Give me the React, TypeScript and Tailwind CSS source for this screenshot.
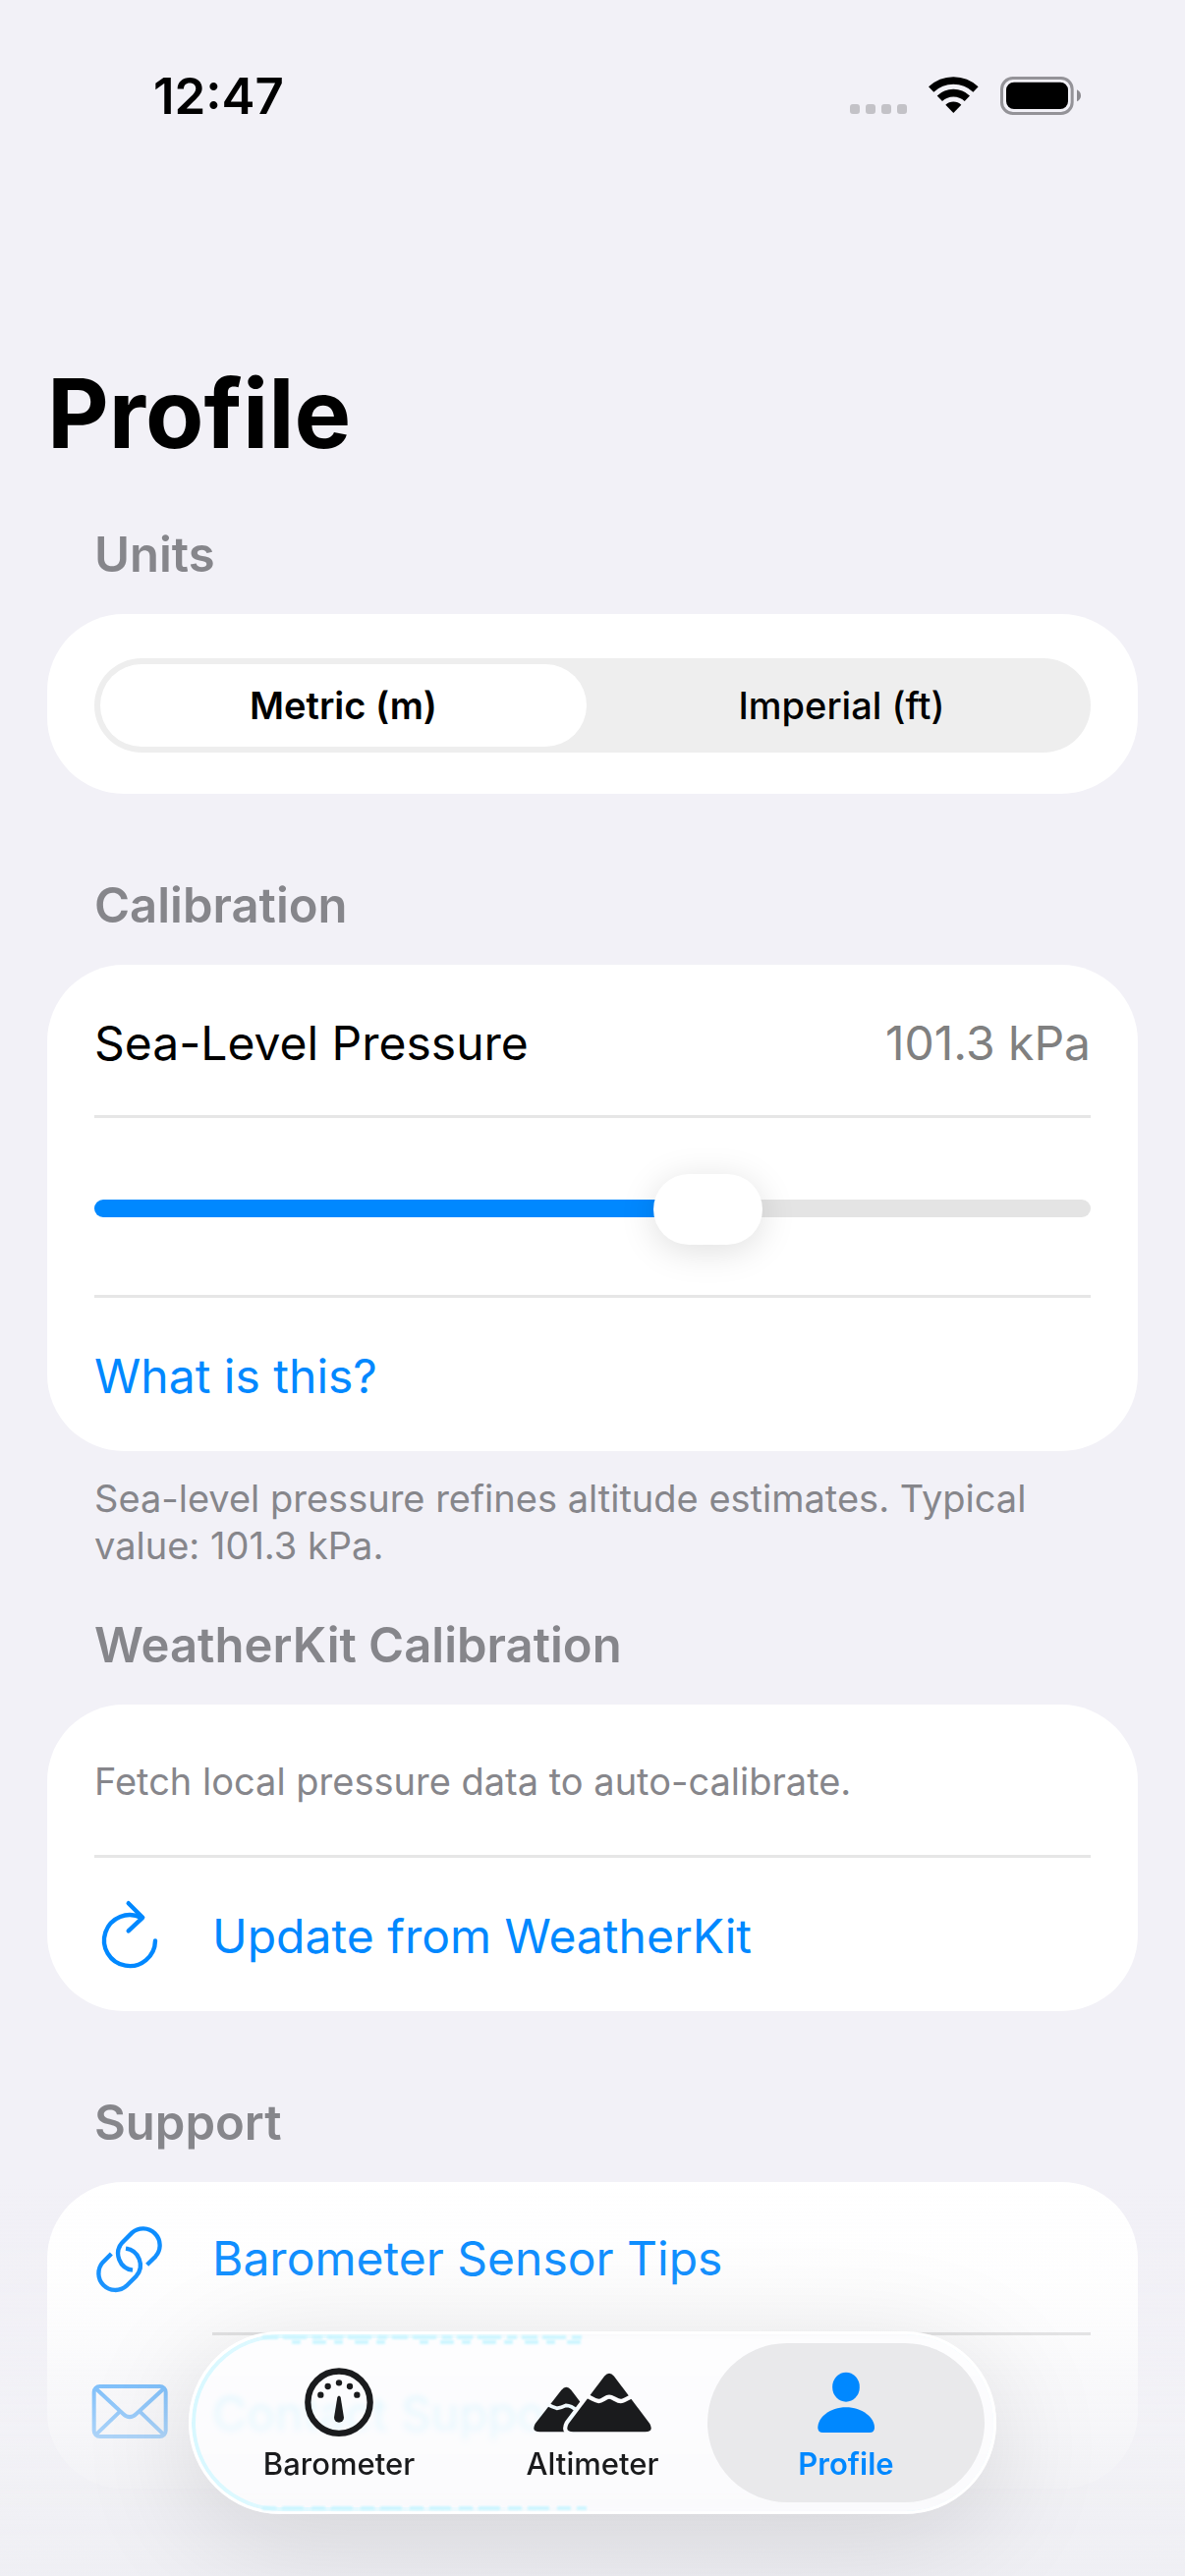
import { useState, type CSSProperties, type ReactNode } from "react";

function WifiIcon() {
  return (
    <svg viewBox="315 84 153 117" className="mb-px h-[39px] w-[51px]" aria-hidden="true">
      <g fill="none" stroke="#000" strokeWidth="23">
        <path d="M323 126A99 99 0 0 1 459 126" />
        <path d="M349 153.5A61 61 0 0 1 433 153.5" />
      </g>
      <path d="M391 198L367 173A35 35 0 0 1 415 173Z" />
    </svg>
  );
}

function BatteryIcon() {
  return (
    <svg viewBox="534 84 246 117" className="h-[39px] w-[82px]" aria-hidden="true">
      <rect x="538.5" y="88.5" width="215" height="108" rx="34" fill="none" stroke="#949398" strokeWidth="9" />
      <rect x="552" y="101" width="189" height="82" rx="24" />
      <path d="M768 124Q780 130 780 142T768 160Z" fill="#8b8a8f" />
    </svg>
  );
}

function RefreshIcon() {
  return (
    <svg viewBox="0 -3 72 84" className="h-[84px] w-[72px] shrink-0" fill="none" stroke="currentColor" strokeWidth="4.4" strokeLinecap="round" strokeLinejoin="round" aria-hidden="true">
      <path d="M62 45.5A26 26 0 1 1 48 22" />
      <path d="M34.7 7.2L49.2 21.8L34.7 35.4" />
    </svg>
  );
}

function LinkIcon() {
  const half = "M269 252L295 226A51 51 0 0 0 223 154L193 184A51 51 0 0 0 225 268";
  return (
    <svg viewBox="108 107 216 252" className="h-[84px] w-[72px] shrink-0" fill="none" stroke="currentColor" strokeWidth="13" aria-hidden="true">
      <path d={half} />
      <path d={half} transform="rotate(180 214.5 235)" />
    </svg>
  );
}

function MailIcon() {
  return (
    <svg viewBox="97 579 234 252" className="h-[84px] w-[78px] shrink-0" fill="none" stroke="currentColor" strokeWidth="12" aria-hidden="true">
      <rect x="105" y="627" width="219" height="153" rx="18" />
      <path d="M110 633L194 711Q214 730 234 711L319 633" />
      <path d="M110 775L184 704M319 775L245 704" />
    </svg>
  );
}

function GaugeIcon() {
  return (
    <svg viewBox="744 567 216 216" className="size-[72px]" fill="currentColor" aria-hidden="true">
      <circle cx="852" cy="675.5" r="95" fill="none" stroke="currentColor" strokeWidth="19" />
      <circle cx="796" cy="653" r="9.5" />
      <circle cx="818" cy="627" r="9.5" />
      <circle cx="852" cy="616" r="9.5" />
      <circle cx="885" cy="627" r="9.5" />
      <circle cx="907" cy="653" r="9.5" />
      <path d="M847 660Q852 651 857 660L867 722A15 15 0 1 1 837 722Z" />
    </svg>
  );
}

function MountainsIcon() {
  const big = "M407 236Q422 218 437 236L546 381Q559 406 532 406L312 406Q285 406 298 381Z";
  return (
    <svg viewBox="191 207 360 216" className="h-[72px] w-[120px]" fill="currentColor" aria-hidden="true">
      <mask id="back-peak" maskUnits="userSpaceOnUse" x="180" y="207" width="380" height="216">
        <rect x="180" y="207" width="380" height="216" fill="#fff" />
        <path d={big} fill="#000" stroke="#000" strokeWidth="25" />
        <path d="M230 320Q248 330 262 334Q276 332 290 325Q306 325 325 342" fill="none" stroke="#000" strokeWidth="11" />
      </mask>
      <mask id="front-peak" maskUnits="userSpaceOnUse" x="180" y="207" width="380" height="216">
        <rect x="180" y="207" width="380" height="216" fill="#fff" />
        <path d="M345 291C368 303 380 312 390 312C401 312 411 299 422 299C433 299 445 312 457 312C468 312 478 302 500 293" fill="none" stroke="#000" strokeWidth="13" />
      </mask>
      <path d="M276 278Q291 261 306 278L345 330V406H210Q183 406 196 381Z" mask="url(#back-peak)" />
      <path d={big} mask="url(#front-peak)" />
    </svg>
  );
}

function PersonIcon() {
  return (
    <svg viewBox="371 207 216 216" className="size-[72px]" fill="currentColor" aria-hidden="true">
      <ellipse cx="479" cy="269" rx="41.5" ry="45" />
      <path d="M393 393C393 362 430 331 479 331C528 331 566 362 566 393Q566 408 551 408H408Q393 408 393 393Z" />
    </svg>
  );
}

function Section({ title, children, footer }: { title: string; children: ReactNode; footer?: string }) {
  return (
    <section>
      <h2 className="mb-[30px] px-12 text-[49px] leading-[60px] font-semibold text-[#86868b]">{title}</h2>
      <div className="rounded-[78px] bg-white px-12">{children}</div>
      {footer && <p className="mt-6 px-12 text-[38px] leading-[48px] text-[#86868b]">{footer}</p>}
    </section>
  );
}

const units = [
  { id: "metric", label: "Metric (m)" },
  { id: "imperial", label: "Imperial (ft)" },
];

function UnitPicker() {
  const [unit, setUnit] = useState("metric");
  return (
    <div role="radiogroup" aria-label="Units" className="flex h-24 gap-3 rounded-full bg-[#eeeeee] p-1.5">
      {units.map(({ id, label }) => (
        <label key={id} className="flex flex-1 cursor-pointer items-center justify-center rounded-full text-[38px] leading-[48px] font-medium has-checked:bg-white has-checked:font-semibold">
          <input type="radio" name="unit" value={id} checked={unit === id} onChange={() => setUnit(id)} className="sr-only" />
          {label}
        </label>
      ))}
    </div>
  );
}

const MIN = 95;
const MAX = 105;

function Calibration() {
  const [pressure, setPressure] = useState(101.3);
  const fill = { "--fill": `${((pressure - MIN) / (MAX - MIN)) * 100}%` } as CSSProperties;
  return (
    <>
      <div className="flex h-[156px] items-center justify-between border-b-3 border-[#e6e6e6] pt-1.5 text-[48px] leading-[60px]">
        <label htmlFor="pressure">Sea-Level Pressure</label>
        <output htmlFor="pressure" className="text-[#808080]">{pressure.toFixed(1)} kPa</output>
      </div>
      <div className="flex h-[183px] items-center border-b-3 border-[#e6e6e6] pt-[3px]">
        <input
          id="pressure"
          type="range"
          min={MIN}
          max={MAX}
          step={0.1}
          value={pressure}
          onChange={(e) => setPressure(Number(e.target.value))}
          style={fill}
          className="h-[72px] w-full appearance-none bg-transparent [&::-webkit-slider-runnable-track]:h-[18px] [&::-webkit-slider-runnable-track]:rounded-full [&::-webkit-slider-runnable-track]:bg-[linear-gradient(to_right,#0088ff_var(--fill),#e4e4e4_var(--fill))] [&::-webkit-slider-thumb]:mt-[-26px] [&::-webkit-slider-thumb]:h-[72px] [&::-webkit-slider-thumb]:w-[111px] [&::-webkit-slider-thumb]:appearance-none [&::-webkit-slider-thumb]:rounded-full [&::-webkit-slider-thumb]:bg-white [&::-webkit-slider-thumb]:shadow-[0_6px_36px_rgba(0,0,0,0.13)]"
        />
      </div>
      <div className="flex h-[156px] items-center pt-[3px]">
        <button type="button" className="text-[48px] leading-[60px] text-[#0088ff]">What is this?</button>
      </div>
    </>
  );
}

function IconCell({ children }: { children: ReactNode }) {
  return <span className="flex w-[72px] shrink-0 justify-center">{children}</span>;
}

const tabs = [
  { label: "Barometer", icon: <GaugeIcon /> },
  { label: "Altimeter", icon: <MountainsIcon /> },
  { label: "Profile", icon: <PersonIcon /> },
];

function GlassRim() {
  return (
    <>
      <span aria-hidden="true" className="pointer-events-none absolute inset-0 rounded-full border-4 border-[#d8f8ff] mask-r-from-0% mask-r-to-50%" />
      <svg viewBox="0 0 330 180" className="pointer-events-none absolute inset-y-0 left-[72px] h-full w-[330px] blur-[1px]" fill="none" stroke="#cdf6ff" strokeWidth="4" aria-hidden="true">
        <path d="M0 3H330" strokeDasharray="16 5 24 6 10 5" />
        <path d="M30 8H128M160 8H324" strokeDasharray="9 12 14 8" />
        <path d="M0 177H330" strokeDasharray="14 6 22 8" />
      </svg>
    </>
  );
}

function TabBar() {
  const [active, setActive] = useState("Profile");
  return (
    <nav aria-label="Main" className="pointer-events-auto relative flex rounded-full border-3 border-white bg-[#fdfdff]/75 p-[9px] shadow-[0_24px_120px_rgba(0,0,0,0.13)] backdrop-blur-[3px]">
      <GlassRim />
      {tabs.map(({ label, icon }, i) => (
        <button
          key={label}
          type="button"
          onClick={() => setActive(label)}
          aria-current={active === label ? "page" : undefined}
          className={`relative flex w-[282px] flex-col items-center gap-[9px] rounded-full pt-6 pb-[21px] text-[31px] leading-9 ${i > 0 ? "-ml-6" : ""} ${active === label ? "bg-[#e9e9eb] font-semibold text-[#0088ff]" : "font-medium text-[#1a1b1d]"}`}
        >
          {icon}
          {label}
        </button>
      ))}
    </nav>
  );
}

export default function App() {
  return (
    <div className="min-h-screen bg-[#f2f1f7] font-['Inter','Liberation_Sans',sans-serif] text-black">
      <header className="flex items-end justify-between pt-[68px] pr-[106px] pl-[156px]">
        <time className="text-[51px] leading-[60px] font-semibold">12:47</time>
        <div className="flex items-end pb-[11px]">
          <div className="mr-[22px] mb-px flex gap-1.5">
            {[0, 1, 2, 3].map((n) => (
              <span key={n} className="size-2.5 rounded-[3px] bg-[#c3c2c7]" />
            ))}
          </div>
          <WifiIcon />
          <span className="w-[22px]" />
          <BatteryIcon />
        </div>
      </header>

      <main className="px-12 pt-[233px] pb-[90px]">
        <h1 className="mb-[54px] text-[97px] leading-[120px] font-bold">Profile</h1>
        <div className="flex flex-col gap-[84px]">
          <Section title="Units">
            <div className="pt-[45px] pb-[42px]">
              <UnitPicker />
            </div>
          </Section>
          <div className="flex flex-col gap-12">
            <Section title="Calibration" footer="Sea-level pressure refines altitude estimates. Typical value: 101.3 kPa.">
              <Calibration />
            </Section>
            <Section title="WeatherKit Calibration">
              <div className="flex h-[156px] items-center border-b-3 border-[#e6e6e6] pt-[3px]">
                <p className="text-[38px] leading-[48px] text-[#86868b]">Fetch local pressure data to auto-calibrate.</p>
              </div>
              <button type="button" className="flex h-[156px] w-full items-center gap-12 text-left text-[48px] leading-[60px] text-[#0088ff]">
                <IconCell><RefreshIcon /></IconCell>
                <span className="pt-[3px]">Update from WeatherKit</span>
              </button>
            </Section>
          </div>
          <Section title="Support">
            <a href="#tips" className="flex h-[156px] items-center gap-12 text-[48px] leading-[60px] text-[#0088ff]">
              <IconCell><LinkIcon /></IconCell>
              <span className="flex h-full flex-1 items-center border-b-3 border-[#dddddd] pt-[3px]">Barometer Sensor Tips</span>
            </a>
            <a href="#contact" className="flex h-[156px] items-center gap-12 text-[48px] leading-[60px] text-[#0088ff]">
              <IconCell><MailIcon /></IconCell>
              <span className="pt-[3px] text-[#00c8ff]">Contact Support</span>
            </a>
          </Section>
        </div>
      </main>

      <div className="pointer-events-none fixed inset-x-0 bottom-0 h-[400px] bg-[linear-gradient(to_bottom,transparent_0%,rgba(242,242,246,0.1)_25%,rgba(242,242,246,0.28)_40%,rgba(242,242,246,0.54)_52%,rgba(242,242,246,0.72)_65%,rgba(240,240,244,0.88)_80%,#efeff4_100%)]" />
      <div className="pointer-events-none fixed inset-x-0 bottom-[63px] flex justify-center">
        <TabBar />
      </div>
    </div>
  );
}
